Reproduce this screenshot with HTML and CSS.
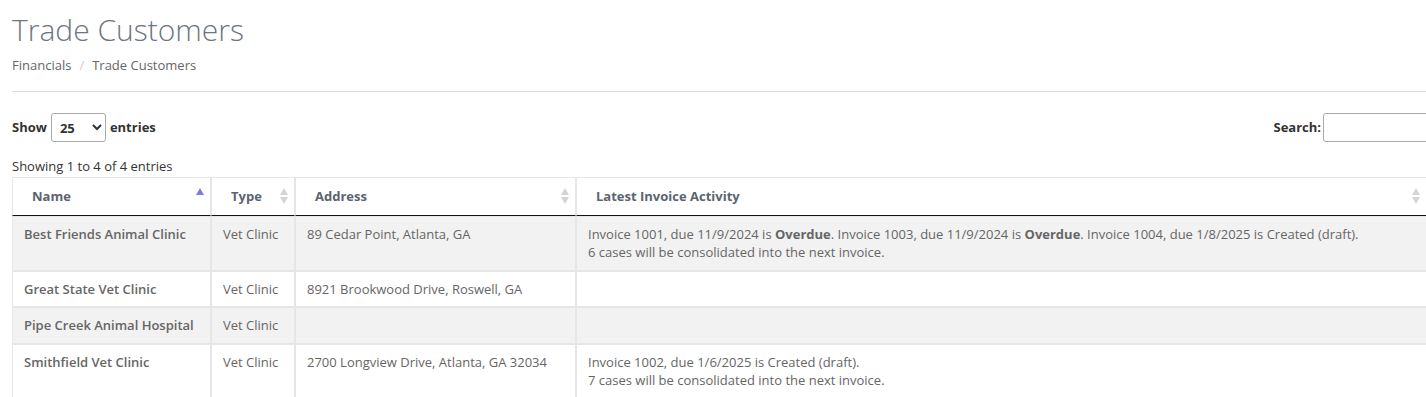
FILE: index.html
```html
<!DOCTYPE html>
<html>
<head>
<meta charset="utf-8">
<link rel="stylesheet" href="styles.css">
</head>
<body>
<div class="page">
  <h1 class="title">Trade Customers</h1>
  <div class="breadcrumb"><span>Financials</span><span class="sep">/</span><span>Trade Customers</span></div>
  <hr class="rule">
  <div class="controls">
    <label class="length">Show <select class="len-select"><option>25</option></select> entries</label>
    <label class="search">Search:<input class="search-input" type="text"></label>
  </div>
  <div class="info">Showing 1 to 4 of 4 entries</div>
  <table class="grid">
    <colgroup>
      <col class="c-name"><col class="c-type"><col class="c-addr"><col class="c-act">
    </colgroup>
    <thead>
      <tr>
        <th><span class="th-label">Name</span><span class="sort asc"><i class="up"></i></span></th>
        <th><span class="th-label">Type</span><span class="sort"><i class="up"></i><i class="down"></i></span></th>
        <th><span class="th-label">Address</span><span class="sort"><i class="up"></i><i class="down"></i></span></th>
        <th><span class="th-label">Latest Invoice Activity</span><span class="sort"><i class="up"></i><i class="down"></i></span></th>
      </tr>
    </thead>
    <tbody>
      <tr class="odd">
        <td class="name">Best Friends Animal Clinic</td>
        <td>Vet Clinic</td>
        <td>89 Cedar Point, Atlanta, GA</td>
        <td>Invoice 1001, due 11/9/2024 is <b>Overdue</b>. Invoice 1003, due 11/9/2024 is <b>Overdue</b>. Invoice 1004, due 1/8/2025 is Created (draft).<br>6 cases will be consolidated into the next invoice.</td>
      </tr>
      <tr>
        <td class="name">Great State Vet Clinic</td>
        <td>Vet Clinic</td>
        <td>8921 Brookwood Drive, Roswell, GA</td>
        <td></td>
      </tr>
      <tr class="odd">
        <td class="name">Pipe Creek Animal Hospital</td>
        <td>Vet Clinic</td>
        <td></td>
        <td></td>
      </tr>
      <tr>
        <td class="name">Smithfield Vet Clinic</td>
        <td>Vet Clinic</td>
        <td>2700 Longview Drive, Atlanta, GA 32034</td>
        <td>Invoice 1002, due 1/6/2025 is Created (draft).<br>7 cases will be consolidated into the next invoice.</td>
      </tr>
    </tbody>
  </table>
</div>
</body>
</html>
```
FILE: styles.css
```css
html, body {
  margin: 0;
  padding: 0;
  background: #fff;
  overflow: hidden;
}
body {
  font-family: "Open Sans", "Liberation Sans", sans-serif;
  font-size: 13px;
  line-height: 19px;
  color: #666;
}
.page {
  width: 1461px;
  padding-left: 12px;
}
.title {
  margin: 0;
  padding-top: 10px;
  font-size: 30px;
  line-height: 40px;
  font-weight: 300;
  color: #6e7580;
}
.breadcrumb {
  margin-top: 6px;
  display: flex;
  gap: 8px;
  color: #666;
}
.breadcrumb .sep {
  color: #ccc;
}
.rule {
  margin: 16px 0 0 0;
  border: 0;
  border-top: 1px solid #ddd;
  width: 1414px;
}
.controls {
  display: flex;
  justify-content: space-between;
  align-items: center;
  margin-top: 21px;
}
.length, .search {
  font-weight: 700;
  color: #333;
  display: flex;
  align-items: center;
  gap: 4px;
}
.search {
  gap: 2px;
}
.len-select {
  width: 55px;
  height: 29px;
  border: 1px solid #aaa;
  border-radius: 3px;
  font-family: inherit;
  font-size: 13px;
  font-weight: 700;
  color: #333;
  padding: 0 4px 0 4px;
  background: #fff;
}
.search-input {
  width: 150px;
  height: 29px;
  box-sizing: border-box;
  border: 1px solid #aaa;
  border-radius: 3px;
  margin: 0;
}
.info {
  margin-top: 15px;
  color: #333;
}
.grid {
  width: 1415px;
  border-collapse: separate;
  border-spacing: 0;
  table-layout: fixed;
  margin-top: 1px;
  line-height: 1.428571;
}
.c-name { width: 199px; }
.c-type { width: 84px; }
.c-addr { width: 281px; }
.grid th, .grid td {
  border: 1px solid #e6e6e6;
  text-align: left;
  vertical-align: top;
}
.grid th {
  padding: 9px 18px 9px 19px;
  font-weight: 700;
  color: #5b6470;
  border-bottom: 1px solid #111;
  position: relative;
}
.grid td {
  padding: 8px 11px 8px 11px;
  color: #666;
}
.grid td.name {
  font-weight: 600;
}
.grid td b {
  font-weight: 700;
}
.grid tbody tr.odd td {
  background: #f2f2f2;
}
.sort {
  position: absolute;
  right: 6px;
  top: 10px;
  display: flex;
  flex-direction: column;
  gap: 2px;
}
.sort i {
  display: block;
  width: 0;
  height: 0;
  border-left: 4px solid transparent;
  border-right: 4px solid transparent;
}
.sort .up {
  border-bottom: 7px solid #d4d4d4;
}
.sort .down {
  border-top: 7px solid #d4d4d4;
}
.sort.asc .up {
  border-bottom-color: #7b7be0;
}
```
